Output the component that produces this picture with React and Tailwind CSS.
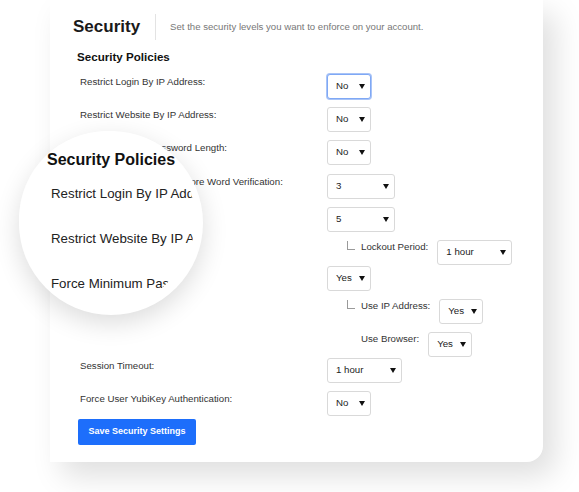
import React from "react";

const Arrow = () => (
  <svg width="6" height="5" viewBox="0 0 6 5" className="shrink-0">
    <path d="M0 0h6L3 5z" fill="#111" />
  </svg>
);

const Select = ({ value, w, focused }) => (
  <div
    className={`flex h-[25px] items-center justify-between rounded-[3px] border bg-white pl-[8px] pr-[5px] text-[9.7px] text-[#222] ${w} ${
      focused ? "border-[#7fa8f5] shadow-[0_0_0_1px_#a9c4f7]" : "border-[#d9d9d9]"
    }`}
  >
    <span>{value}</span>
    <Arrow />
  </div>
);

const Row = ({ label, h, children }) => (
  <div className={`flex ${h}`}>
    <div className="w-[247px] pt-[2px] leading-[12px]">{label}</div>
    {children}
  </div>
);

const SubRow = ({ label, h, corner, children }) => (
  <div className={`flex pl-[267px] ${h}`}>
    <div className="w-[14px]">
      {corner && <div className="mt-[1px] h-[9px] w-[8px] border-b border-l border-[#9a9a9a]" />}
    </div>
    <div className="pt-[1px] leading-[12px]">{label}</div>
    <div className="ml-[9px]">{children}</div>
  </div>
);

export default function App() {
  return (
    <div className="relative h-[492px] w-[579px] overflow-hidden bg-white pl-[50px] font-['Liberation_Sans',Arial,sans-serif]">
      <div className="w-[493px] rounded-br-[16px] bg-white pb-[17px] pl-[23px] pt-[12px] shadow-[12px_14px_30px_rgba(0,0,0,0.13)]">
        <div className="flex h-[30px] items-center">
          <h1 className="text-[17px] font-bold leading-[30px] text-[#1a1a1a]">Security</h1>
          <div className="ml-[15px] h-[26px] w-px bg-[#e3e3e3]" />
          <p className="ml-[14px] text-[9.6px] text-[#777]">
            Set the security levels you want to enforce on your account.
          </p>
        </div>

        <h2 className="ml-[4px] mt-[8px] text-[11.6px] font-bold leading-[14px] text-[#111]">Security Policies</h2>

        <div className="ml-[7px] mt-[10px] text-[9.7px] text-[#333]">
          <Row label="Restrict Login By IP Address:" h="h-[33px]">
            <Select value="No" w="w-[44px]" focused />
          </Row>
          <Row label="Restrict Website By IP Address:" h="h-[33px]">
            <Select value="No" w="w-[44px]" />
          </Row>
          <Row label="Force Minimum Password Length:" h="h-[34px]">
            <Select value="No" w="w-[44px]" />
          </Row>
          <Row label="Failed Login Attempts Before Word Verification:" h="h-[33px]">
            <Select value="3" w="w-[68px]" />
          </Row>
          <Row label="Failed Login Attempts:" h="h-[33px]">
            <Select value="5" w="w-[68px]" />
          </Row>
          <SubRow label="Lockout Period:" h="h-[26px]" corner>
            <Select value="1 hour" w="w-[75px]" />
          </SubRow>
          <Row label="Remember Devices:" h="h-[33px]">
            <Select value="Yes" w="w-[44px]" />
          </Row>
          <SubRow label="Use IP Address:" h="h-[33px]" corner>
            <Select value="Yes" w="w-[44px]" />
          </SubRow>
          <SubRow label="Use Browser:" h="h-[26px]">
            <Select value="Yes" w="w-[44px]" />
          </SubRow>
          <Row label="Session Timeout:" h="h-[33px]">
            <Select value="1 hour" w="w-[75px]" />
          </Row>
          <Row label="Force User YubiKey Authentication:" h="h-[28px]">
            <Select value="No" w="w-[44px]" />
          </Row>
          <button className="-ml-[2px] h-[26px] w-[118px] rounded-[2px] bg-[#1d6efb] text-[9px] font-bold text-white">
            Save Security Settings
          </button>
        </div>
      </div>

      {/* magnifier */}
      <div className="absolute left-[19px] top-[131px] h-[184px] w-[184px] rounded-full bg-white pb-[8px] pr-[8px] shadow-[0_8px_26px_rgba(0,0,0,0.14)]">
        <div className="h-full w-full overflow-hidden rounded-full bg-white pl-[32px] pt-[55px] text-[#222]">
          <div className="whitespace-nowrap text-[13.3px] leading-[16px]">
            <div className="h-[45px]">Restrict Login By IP Address:</div>
            <div className="h-[45px]">Restrict Website By IP Address:</div>
            <div className="h-[45px]">Force Minimum Password Length:</div>
          </div>
        </div>
        <div className="absolute left-[28px] top-[19px] whitespace-nowrap text-[16px] font-bold leading-[20px] text-[#111]">
          Security Policies
        </div>
      </div>
    </div>
  );
}
